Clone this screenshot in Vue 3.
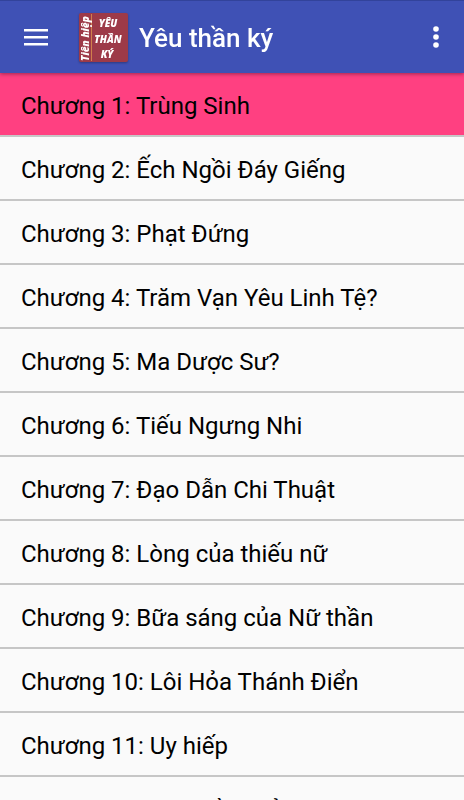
<template>
  <div class="app">
    <header class="toolbar">
      <button class="icon-btn" type="button" aria-label="Menu">
        <svg width="24" height="24" viewBox="0 0 24 24">
          <path d="M0 4h24v2.6H0zM0 11h24v2.6H0zM0 18h24v2.6H0z" fill="#fff" />
        </svg>
      </button>

      <!-- Book logo -->
      <svg class="logo" width="49" height="49" viewBox="0 0 49 49" role="img" aria-label="Tiên hiệp">
        <rect x="0" y="0" width="49" height="49" rx="2" fill="#9d3a48" />
        <rect x="12" y="1" width="1" height="47" fill="#d0804c" />
        <text class="logo-side" transform="translate(10 48) rotate(-90)">Tiên hiệp</text>
        <text class="logo-word" x="29" y="14">YÊU</text>
        <text class="logo-word" x="29" y="30">THẦN</text>
        <text class="logo-word" x="28" y="45">KÝ</text>
      </svg>

      <h1 class="title">Yêu thần ký</h1>

      <button class="icon-btn" type="button" aria-label="Thêm">
        <svg width="8" height="24" viewBox="0 0 8 24">
          <circle cx="4" cy="4" r="2.8" fill="#fff" />
          <circle cx="4" cy="12" r="2.8" fill="#fff" />
          <circle cx="4" cy="20" r="2.8" fill="#fff" />
        </svg>
      </button>
    </header>

    <ul class="chapters">
      <li v-for="(name, i) in chapters" :key="name">
        <button
          class="chapter"
          :class="{ active: i === current }"
          type="button"
          @click="current = i"
        >
          Chương {{ i + 1 }}: {{ name }}
        </button>
      </li>
    </ul>
  </div>
</template>

<script setup>
import { ref } from 'vue'

const current = ref(0)

const chapters = [
  'Trùng Sinh',
  'Ếch Ngồi Đáy Giếng',
  'Phạt Đứng',
  'Trăm Vạn Yêu Linh Tệ?',
  'Ma Dược Sư?',
  'Tiếu Ngưng Nhi',
  'Đạo Dẫn Chi Thuật',
  'Lòng của thiếu nữ',
  'Bữa sáng của Nữ thần',
  'Lôi Hỏa Thánh Điển',
  'Uy hiếp',
  'Linh Hồn Hải'
]
</script>

<style>
body {
  background: #fafafa;
}
</style>

<style scoped>
.app {
  display: flex;
  flex-direction: column;
  height: 100vh;
  font-family: Roboto, "Noto Sans", sans-serif;
  color: #000;
}

.toolbar {
  position: relative;
  z-index: 1;
  display: flex;
  align-items: center;
  flex-shrink: 0;
  box-sizing: border-box;
  height: 73px;
  padding: 0 24px;
  background: #3f51b5;
  border-top: 1px solid #32439b;
  box-shadow: 0 1px 4px rgba(0, 0, 0, 0.4);
}

.icon-btn {
  display: flex;
  padding: 0;
  border: 0;
  background: none;
  cursor: pointer;
}

.logo {
  margin-left: 31px;
  filter: drop-shadow(0 1px 1px rgba(0, 0, 0, 0.3));
}

.logo-side,
.logo-word {
  fill: #fff;
  font-family: "Open Sans", Roboto, sans-serif;
  font-style: italic;
  font-weight: 800;
}

.logo-side {
  font-size: 10px;
}

.logo-word {
  font-size: 10px;
  text-anchor: middle;
}

.title {
  flex: 1;
  margin: 0 0 0 11px;
  padding-top: 2px;
  color: #fff;
  font-size: 26px;
  font-weight: 500;
  line-height: 32px;
}

.chapters {
  flex: 1;
  min-height: 0;
  margin: 0;
  padding: 0;
  overflow-y: auto;
  list-style: none;
  scrollbar-width: none;
}

.chapter {
  display: block;
  width: 100%;
  padding: 17px 21px 13px;
  border: 0;
  border-bottom: 2px solid #c6c6c6;
  background: #fafafa;
  color: inherit;
  font-family: inherit;
  font-size: 24px;
  line-height: 32px;
  text-align: left;
  cursor: pointer;
}

.chapter.active {
  background: #ff4081;
}
</style>
